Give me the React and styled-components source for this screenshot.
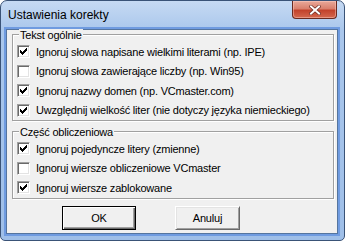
import React from 'react';
import styled, { createGlobalStyle } from 'styled-components';

const GlobalStyle = createGlobalStyle`
  * { box-sizing: border-box; }
  html, body { margin: 0; padding: 0; background: #ffffff; }
  body { font-family: "Liberation Sans", Arial, sans-serif; }
`;

const Window = styled.div`
  width: 345px;
  height: 241px;
  display: flex;
  flex-direction: column;
  border: 1px solid #3a5377;
  border-radius: 7px 7px 5px 5px;
  background: linear-gradient(180deg, #c6daf3 0px, #aac7ec 29px, #9fbfe8 100%);
  overflow: hidden;
`;

const TitleBar = styled.div`
  height: 29px;
  flex: none;
  display: flex;
  align-items: flex-start;
  padding-left: 7px;
`;

const Caption = styled.div`
  flex: 1;
  padding-top: 7px;
  font-family: "Liberation Sans", Arial, sans-serif;
  font-size: 12px;
  line-height: 15px;
  color: #000;
`;

const CloseButton = styled.div`
  width: 45px;
  height: 18px;
  margin-right: 7px;
  display: flex;
  align-items: center;
  justify-content: center;
  border: 1px solid #6a2a20;
  border-top: none;
  border-radius: 0 0 4px 4px;
  background: linear-gradient(180deg, #e9a99a 0%, #d9806d 45%, #c2422b 55%, #d4684f 100%);
  box-shadow: inset 0 0 0 1px rgba(255, 210, 200, 0.45);
`;

const Frame = styled.div`
  flex: 1;
  display: flex;
  padding: 0 7px 7px 6px;
`;

const Client = styled.div`
  flex: 1;
  display: flex;
  flex-direction: column;
  padding: 4px 3px 0 5px;
  background: #f0f0f0;
  box-shadow: 0 0 0 1px #55759f, 0 0 0 3px #6f9be0;
  font-size: 11px;
  letter-spacing: -0.2px;
  color: #000;
`;

const Group = styled.div`
  display: flex;
  flex-direction: column;
  border: 1px solid #a0a0a0;
  box-shadow: 1px 1px 0 #ffffff, inset 1px 1px 0 #ffffff;
  margin-bottom: ${(p) => p.$gap || 0}px;
`;

const GroupTitle = styled.div`
  align-self: flex-start;
  margin: -6px 0 0 6px;
  padding: 0 1px;
  height: 13px;
  line-height: 13px;
  background: #f0f0f0;
`;

const Row = styled.label`
  height: 19.5px;
  display: flex;
  align-items: center;
  padding-left: 4px;
  gap: 6px;
  white-space: nowrap;
`;

const Box = styled.span`
  width: 13px;
  height: 13px;
  flex: none;
  display: flex;
  align-items: center;
  justify-content: center;
  background: #ffffff;
  border: 1px solid;
  border-color: #a0a0a0 #ffffff #ffffff #a0a0a0;
  box-shadow: inset 1px 1px 0 #696969, inset -1px -1px 0 #e3e3e3;
`;

const Buttons = styled.div`
  display: flex;
  gap: 39px;
  padding-left: 50px;
  margin-top: 7px;
`;

const Button = styled.button`
  width: ${(p) => p.$w}px;
  height: 24px;
  padding: 0;
  font-family: "Liberation Sans", Arial, sans-serif;
  font-size: 11px;
  letter-spacing: -0.2px;
  color: #000;
  background: #f0f0f0;
  border: 1px solid;
  border-color: ${(p) => (p.$default ? '#000' : '#fff #696969 #696969 #fff')};
  box-shadow: ${(p) =>
    p.$default
      ? 'inset 1px 1px 0 #fff, inset -1px -1px 0 #696969, inset -2px -2px 0 #a0a0a0'
      : 'inset 1px 1px 0 #e3e3e3, inset -1px -1px 0 #a0a0a0'};
`;

const CHECK = [
  '......#',
  '.....##',
  '#...###',
  '##.###.',
  '#####..',
  '.###...',
  '..#....',
];

const CheckMark = () => (
  <svg width="7" height="7" viewBox="0 0 7 7" shapeRendering="crispEdges">
    {CHECK.flatMap((line, y) =>
      line.split('').map((c, x) =>
        c === '#' ? <rect key={`${x}-${y}`} x={x} y={y} width="1" height="1" fill="#000" /> : null
      )
    )}
  </svg>
);

const CloseIcon = () => (
  <svg width="12" height="10" viewBox="0 0 12 10">
    <path d="M2 1.5 L10 8.5 M10 1.5 L2 8.5" stroke="#6b2b22" strokeWidth="3.4" strokeLinecap="square" />
    <path d="M2 1.5 L10 8.5 M10 1.5 L2 8.5" stroke="#ffffff" strokeWidth="2" strokeLinecap="square" />
  </svg>
);

const Option = ({ checked, children }) => (
  <Row>
    <Box>{checked && <CheckMark />}</Box>
    <span>{children}</span>
  </Row>
);

const general = [
  { text: 'Ignoruj słowa napisane wielkimi literami (np. IPE)', checked: true },
  { text: 'Ignoruj słowa zawierające liczby (np. Win95)', checked: false },
  { text: 'Ignoruj nazwy domen (np. VCmaster.com)', checked: true },
  { text: 'Uwzględnij wielkość liter (nie dotyczy języka niemieckiego)', checked: true },
];

const calc = [
  { text: 'Ignoruj pojedyncze litery (zmienne)', checked: true },
  { text: 'Ignoruj wiersze obliczeniowe VCmaster', checked: false },
  { text: 'Ignoruj wiersze zablokowane', checked: true },
];

const App = () => {
  return (
    <>
      <GlobalStyle />
      <Window>
        <TitleBar>
          <Caption>Ustawienia korekty</Caption>
          <CloseButton>
            <CloseIcon />
          </CloseButton>
        </TitleBar>
        <Frame>
          <Client>
            <Group $gap={10}>
              <GroupTitle>Tekst ogólnie</GroupTitle>
              {general.map((o) => (
                <Option key={o.text} checked={o.checked}>{o.text}</Option>
              ))}
            </Group>
            <Group>
              <GroupTitle>Część obliczeniowa</GroupTitle>
              {calc.map((o) => (
                <Option key={o.text} checked={o.checked}>{o.text}</Option>
              ))}
            </Group>
            <Buttons>
              <Button $default $w={74}>OK</Button>
              <Button $w={65}>Anuluj</Button>
            </Buttons>
          </Client>
        </Frame>
      </Window>
    </>
  );
};

export default App;
